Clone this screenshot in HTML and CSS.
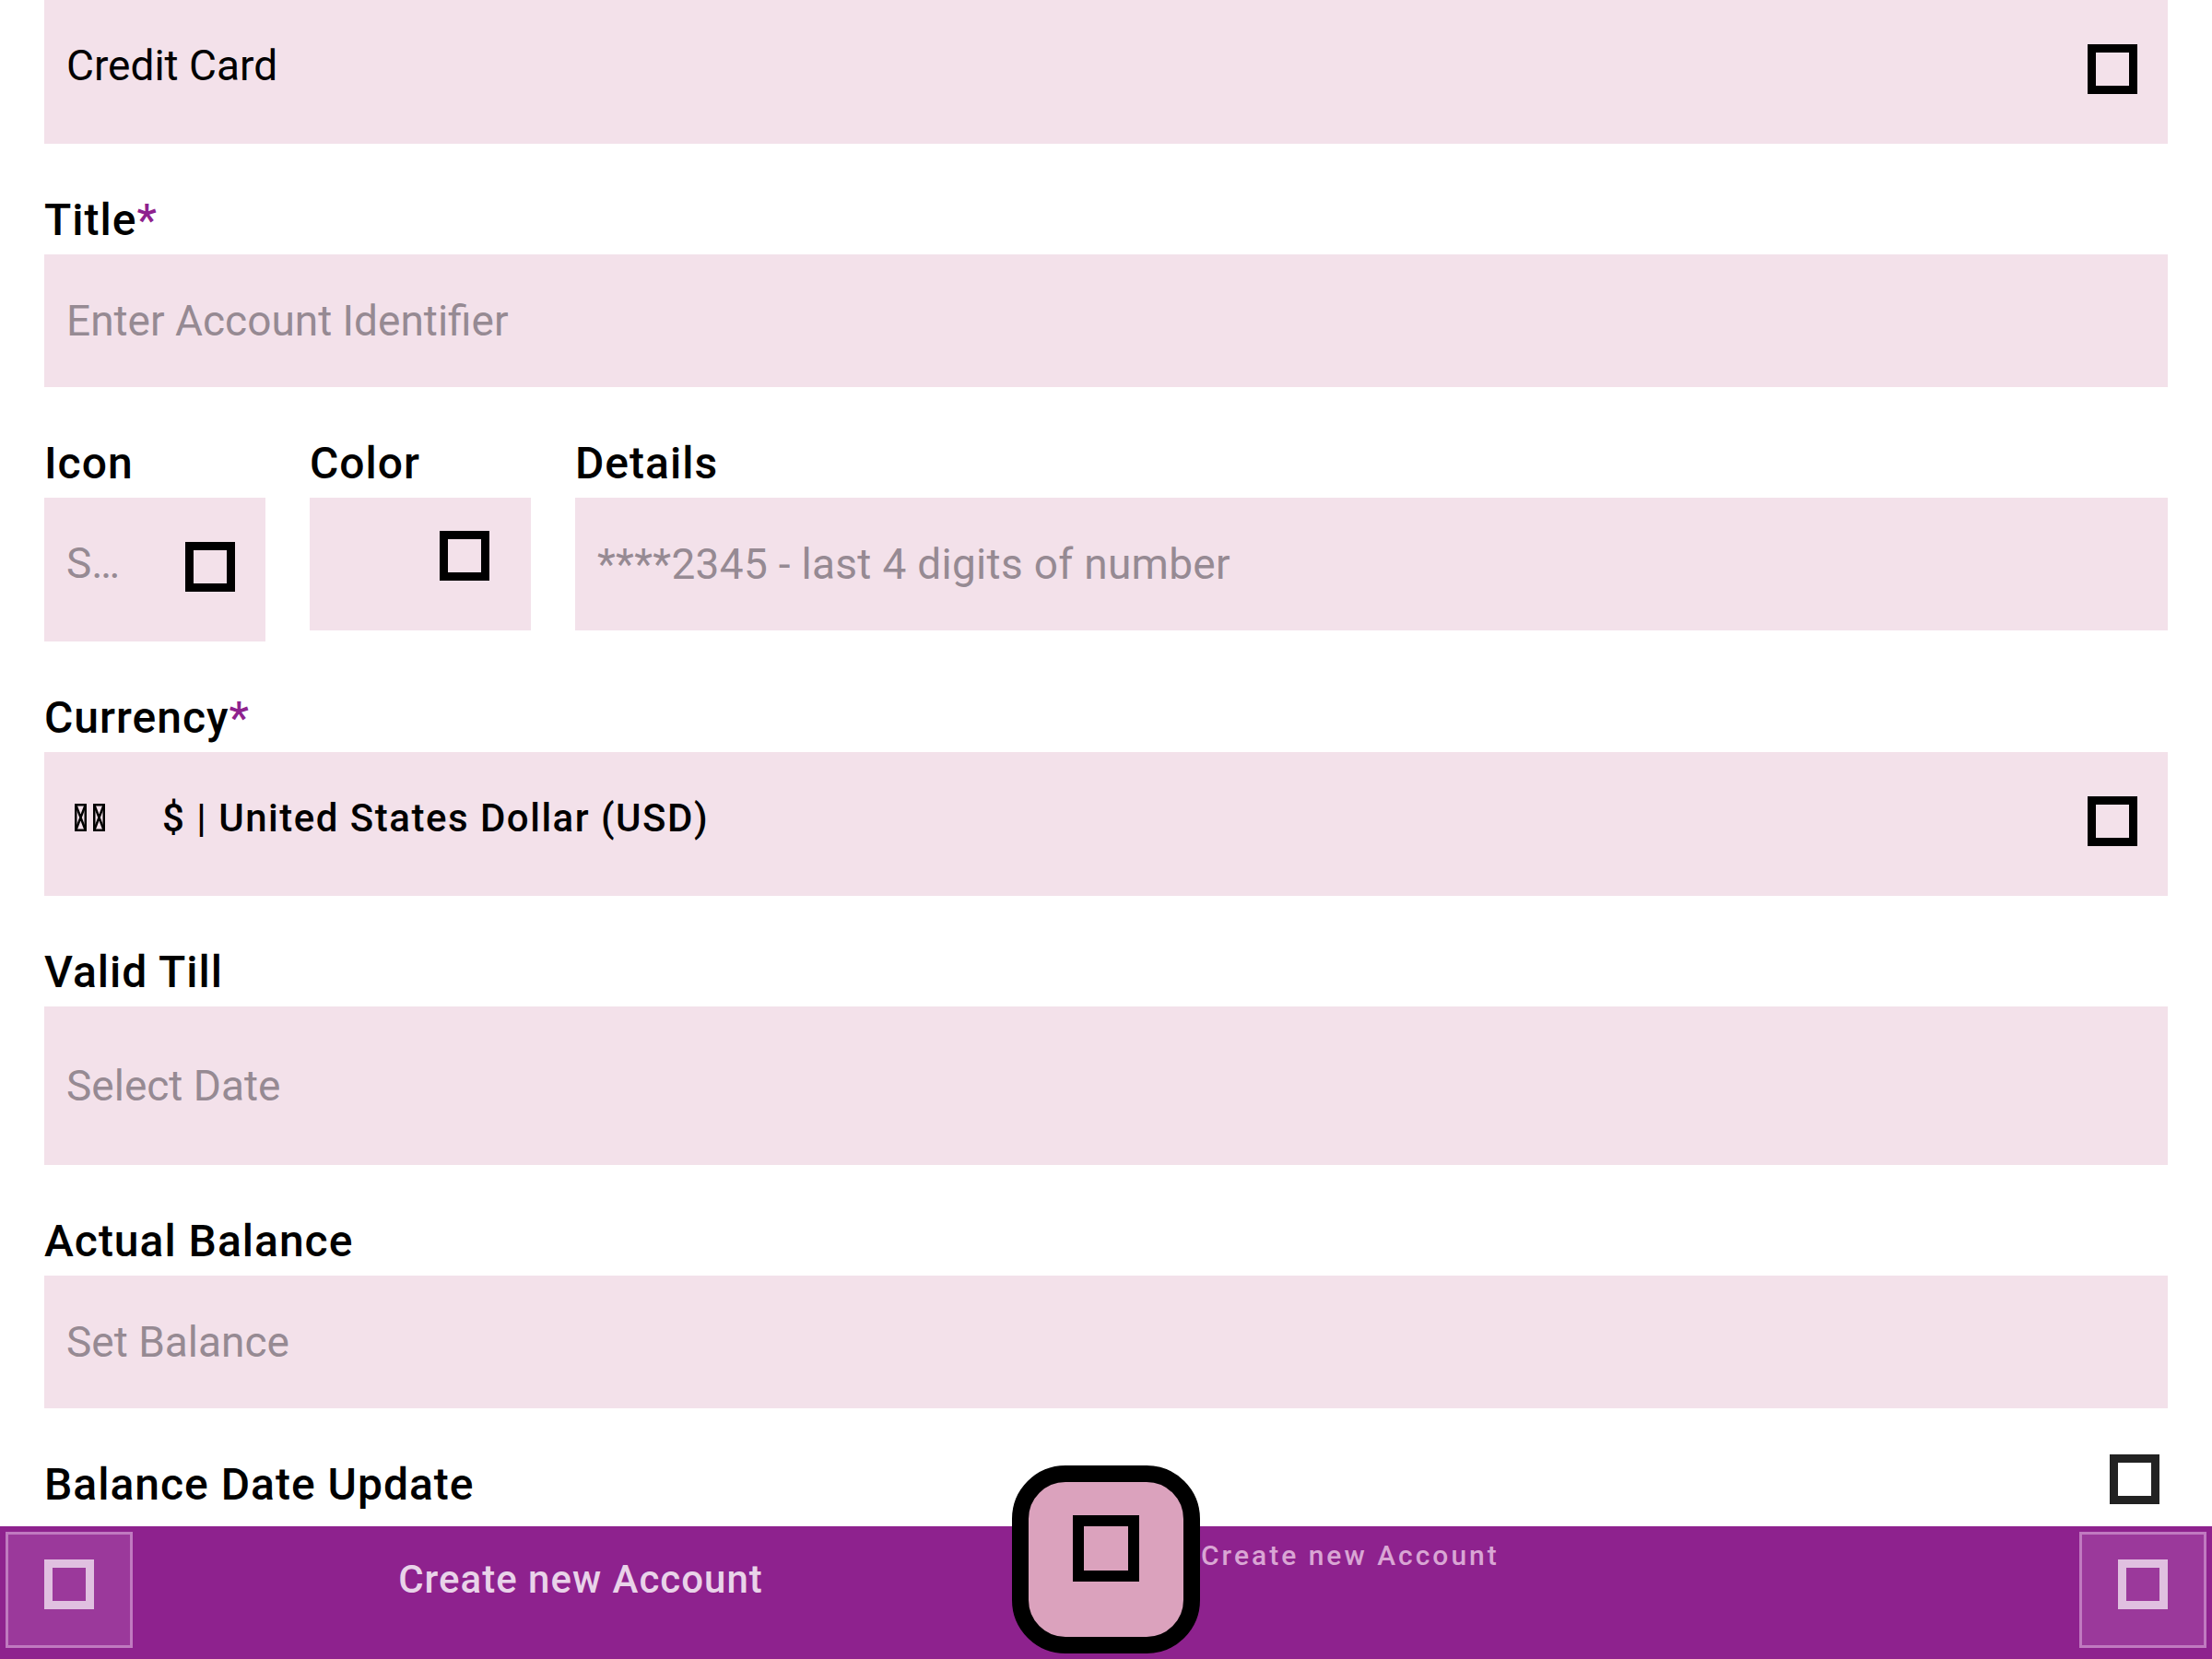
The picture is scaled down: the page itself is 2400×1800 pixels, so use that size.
FILE: index.html
```html
<!DOCTYPE html>
<html lang="en">
<head>
<meta charset="utf-8">
<title>Create new Account</title>
<link rel="stylesheet" href="styles.css">
</head>
<body>
<div class="page">
  <main class="form">
    <div class="field dropdown">
      <span class="value">Credit Card</span>
      <span class="tofu"></span>
    </div>

    <section class="group">
      <div class="label">Title<span class="req">*</span></div>
      <div class="field input"><span class="hint">Enter Account Identifier</span></div>
    </section>

    <section class="group row3">
      <div class="col">
        <div class="label">Icon</div>
        <div class="field dropdown iconsel"><span class="hint">S…</span><span class="tofu"></span></div>
      </div>
      <div class="col">
        <div class="label">Color</div>
        <div class="field colorsel"><span class="tofu"></span></div>
      </div>
      <div class="col">
        <div class="label">Details</div>
        <div class="field input"><span class="hint details">****2345 - last 4 digits of number</span></div>
      </div>
    </section>

    <section class="group">
      <div class="label">Currency<span class="req">*</span></div>
      <div class="field dropdown">
        <span class="currency">
          <svg class="flag" width="34" height="30" viewBox="0 0 34 30" aria-hidden="true">
            <g fill="none" stroke="#000" stroke-width="2.5">
              <rect x="1.25" y="1.25" width="10.5" height="27.5"/>
              <path d="M1.25 1.25 L11.75 28.75 M11.75 1.25 L1.25 28.75"/>
              <rect x="21.25" y="1.25" width="10.5" height="27.5"/>
              <path d="M21.25 1.25 L31.75 28.75 M31.75 1.25 L21.25 28.75"/>
            </g>
          </svg>
          <span class="cur-text">$ | United States Dollar (USD)</span>
        </span>
        <span class="tofu"></span>
      </div>
    </section>

    <section class="group">
      <div class="label">Valid Till</div>
      <div class="field input tall"><span class="hint">Select Date</span></div>
    </section>

    <section class="group">
      <div class="label">Actual Balance</div>
      <div class="field input"><span class="hint">Set Balance</span></div>
    </section>

    <section class="group check-row">
      <div class="label">Balance Date Update</div>
      <span class="tofu check"></span>
    </section>
  </main>

  <nav class="bar">
    <div class="navbtn"><span class="tofu light"></span></div>
    <div class="bar-title">Create new Account</div>
    <div class="fab"><span class="tofu big"></span></div>
    <div class="fab-label">Create new Account</div>
    <div class="navbtn"><span class="tofu light"></span></div>
  </nav>
</div>
</body>
</html>
```

FILE: styles.css
```css
html, body {
  margin: 0;
  padding: 0;
}

body {
  width: 2400px;
  height: 1800px;
  overflow: hidden;
  background: #ffffff;
  font-family: Roboto, "Liberation Sans", sans-serif;
  color: #000;
}

.page {
  position: relative;
  width: 2400px;
  height: 1800px;
  overflow: hidden;
}

.form {
  padding: 0 48px;
}

.group {
  margin-top: 55px;
}

.label {
  font-size: 48px;
  font-weight: 500;
  line-height: 56px;
  height: 56px;
  margin-bottom: 9px;
  letter-spacing: 1px;
  white-space: nowrap;
}

.req {
  color: #8e228e;
}

.field {
  box-sizing: border-box;
  background: #f3e1ea;
  display: flex;
  align-items: center;
  padding: 0 33px 0 24px;
}

.field.input {
  height: 144px;
}

.field.input.tall {
  height: 172px;
}

.field.dropdown {
  height: 156px;
}

.value,
.hint {
  flex: 1;
  min-width: 0;
  font-size: 46px;
  white-space: nowrap;
  overflow: hidden;
  text-overflow: ellipsis;
}

.value {
  color: #000;
}

.hint {
  color: #968a93;
}

.hint.details {
  letter-spacing: 0.3px;
}

.dropdown .value,
.dropdown .hint,
.dropdown .currency {
  margin-bottom: 14px;
}

.tofu {
  flex: none;
  display: block;
  box-sizing: border-box;
  width: 54px;
  height: 54px;
  border: 9px solid #000;
}

.dropdown .tofu {
  margin-bottom: 6px;
}

/* three column row */
.row3 {
  display: grid;
  grid-template-columns: 240px 240px 1fr;
  column-gap: 48px;
  align-items: start;
}

.colorsel {
  height: 144px;
  justify-content: flex-end;
  padding-right: 45px;
}

.colorsel .tofu {
  margin-bottom: 18px;
}

/* currency */
.currency {
  flex: 1;
  display: flex;
  align-items: center;
  padding-left: 9px;
}

.flag {
  flex: none;
  display: block;
}

.cur-text {
  margin-left: 61px;
  font-size: 42px;
  font-weight: 500;
  letter-spacing: 1.5px;
  white-space: nowrap;
}

/* checkbox row */
.check-row {
  display: flex;
  justify-content: space-between;
  align-items: flex-start;
}

.tofu.check {
  border-color: #222;
  margin-top: -5px;
  margin-right: 9px;
}

/* bottom bar */
.bar {
  position: absolute;
  left: 0;
  bottom: 0;
  width: 2400px;
  height: 144px;
  box-sizing: border-box;
  padding: 6px;
  background: #8e228e;
  display: flex;
  align-items: flex-start;
}

.navbtn {
  flex: none;
  box-sizing: border-box;
  width: 138px;
  height: 126px;
  border: 3px solid #c07ac0;
  background: #9b399b;
  display: flex;
  justify-content: center;
  padding-top: 27px;
}

.tofu.light {
  border-color: #e0c0e0;
}

.bar-title {
  flex: 1 1 0;
  min-width: 0;
  text-align: center;
  text-indent: 18px;
  margin-top: 27px;
  font-size: 42px;
  font-weight: 500;
  letter-spacing: 1px;
  color: #e9d3e9;
  white-space: nowrap;
}

.fab {
  flex: none;
  box-sizing: border-box;
  width: 204px;
  height: 204px;
  margin-top: -72px;
  border: 18px solid #000;
  border-radius: 58px;
  background: #dba2bd;
  display: flex;
  justify-content: center;
  padding-top: 36px;
}

.tofu.big {
  width: 72px;
  height: 72px;
  border-width: 12px;
}

.fab-label {
  flex: 1 1 0;
  min-width: 0;
  margin-top: 8px;
  text-indent: 1px;
  font-size: 30px;
  font-weight: 500;
  letter-spacing: 3px;
  color: #d9a6d4;
  white-space: nowrap;
}
```
